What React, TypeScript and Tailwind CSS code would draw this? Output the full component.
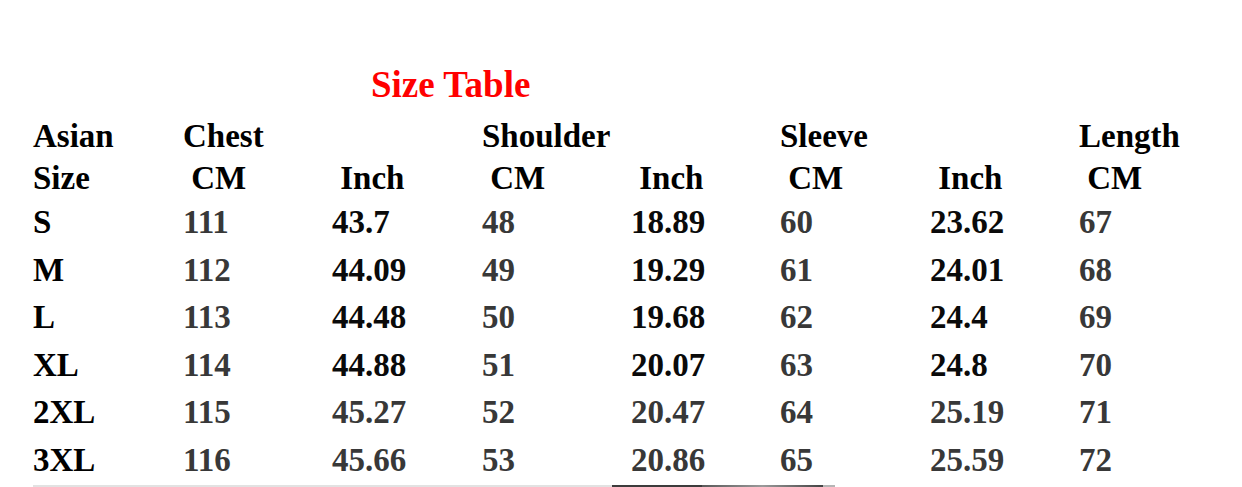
const font = { fontFamily: '"Liberation Serif", "Times New Roman", serif' };

type Row = { size: string; cells: string[]; dim?: boolean };

const rows: Row[] = [
  { size: "S", cells: ["111", "43.7", "48", "18.89", "60", "23.62", "67"] },
  { size: "M", cells: ["112", "44.09", "49", "19.29", "61", "24.01", "68"] },
  { size: "L", cells: ["113", "44.48", "50", "19.68", "62", "24.4", "69"] },
  { size: "XL", cells: ["114", "44.88", "51", "20.07", "63", "24.8", "70"] },
  { size: "2XL", cells: ["115", "45.27", "52", "20.47", "64", "25.19", "71"], dim: true },
  { size: "3XL", cells: ["116", "45.66", "53", "20.86", "65", "25.59", "72"], dim: true },
];

const cols = "grid grid-cols-[150px_149px_150px_149px_149px_150px_149px_150px]";

export default function App() {
  return (
    <div className="w-[1242px] h-[487px] bg-white overflow-hidden flex flex-col pl-[33px] pt-[65px]" style={font}>
      <h1 className="ml-[338px] text-[37px] leading-[40px] font-bold text-[#ff0000]">Size Table</h1>

      <div className="mt-[10px] text-[33px] font-bold text-black whitespace-pre">
        <div className={`${cols} leading-[42px]`}>
          <span>Asian</span>
          <span>Chest</span>
          <span />
          <span>Shoulder</span>
          <span />
          <span>Sleeve</span>
          <span />
          <span>Length</span>
        </div>
        <div className={`${cols} leading-[42px]`}>
          <span>Size</span>
          <span> CM</span>
          <span> Inch</span>
          <span> CM</span>
          <span> Inch</span>
          <span> CM</span>
          <span> Inch</span>
          <span> CM</span>
        </div>

        {rows.map((r) => (
          <div key={r.size} className={`${cols} leading-[47.6px]`}>
            <span className="text-black">{r.size}</span>
            {r.cells.map((c, i) => {
              const isCm = i % 2 === 0;
              return (
                <span key={i} className={isCm || r.dim ? "text-[#383838]" : "text-[#0a0a0a]"}>
                  {c}
                </span>
              );
            })}
          </div>
        ))}
      </div>

      <div className="flex h-[2px] mt-auto">
        <div className="w-[579px] bg-[#e2e2e2]" />
        <div className="w-[90px] bg-[#3c3c3c]" />
        <div className="w-[121px] bg-gradient-to-r from-[#5a5a5a] via-[#9a9a9a] to-[#444]" />
        <div className="w-[12px] bg-[#b5b5b5]" />
      </div>
    </div>
  );
}
